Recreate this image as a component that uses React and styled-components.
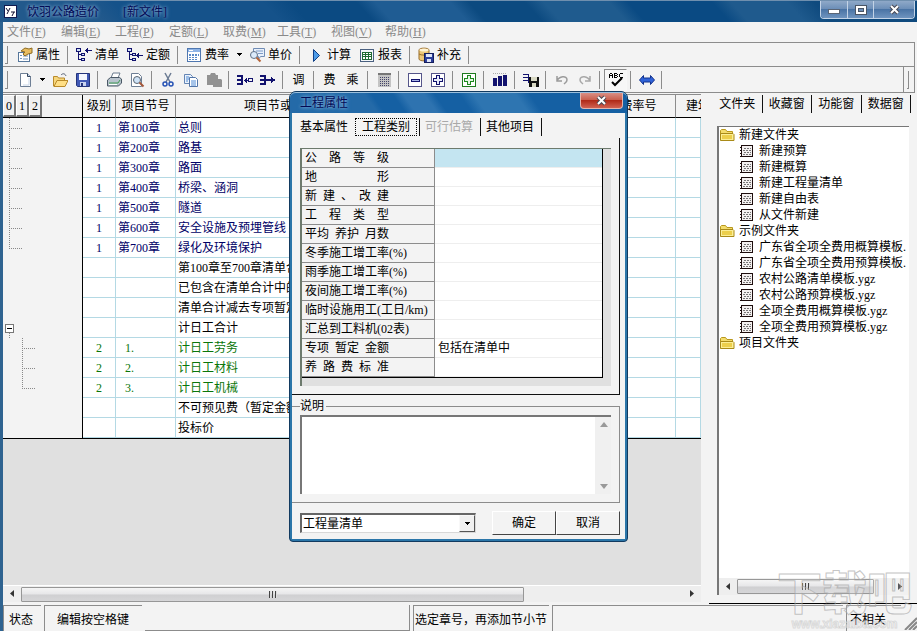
import React from "react";
import styled, { createGlobalStyle, css } from "styled-components";

const GlobalStyle = createGlobalStyle`
  * { box-sizing: border-box; }
  html, body, #root { height: 100%; }
  body {
    margin: 0;
    overflow: hidden;
    background: #f3f3f3;
    color: #000;
    font: 12px/16px "Liberation Serif", "Noto Sans CJK SC", sans-serif;
  }
  button, input, select, textarea { font: inherit; color: inherit; }
`;

/* ---------- window frame ---------- */

const Window = styled.div`
  position: relative;
  display: flex;
  flex-direction: column;
  height: 100vh;
  min-height: 600px;
  overflow: hidden;
  background: #f3f3f3;
`;

const TitleBar = styled.header`
  display: flex;
  align-items: center;
  height: 22px;
  padding-left: 4px;
  border-top: 1px solid #6f8fae;
  background: linear-gradient(
    48deg,
    #22598c 0 11%, #15528a 14% 30%, #0b4a82 33% 40%, #1f5c93 42% 50%,
    #0c4a80 52% 58%, #1f5b8e 60% 67%, #0a4a83 69% 78%, #1f5a8d 80% 86%, #0f4a7e 89%
  );
`;

const Title = styled.h1`
  display: flex;
  gap: 24px;
  flex: 1;
  margin: 0 0 0 10px;
  font-size: 12px;
  font-weight: 400;
  color: #020a55;
  text-shadow: 0 0 3px #7fa8cf, 0 0 4px #7fa8cf;
`;

const CaptionButtons = styled.div`
  display: flex;
  align-self: flex-start;
  height: 18px;
  margin-right: 2px;
  border: 1px solid #c3d3e6;
  border-top: 0;
  border-radius: 0 0 4px 4px;
  overflow: hidden;
`;

const CaptionButton = styled.button`
  display: flex;
  align-items: center;
  justify-content: center;
  width: ${(p) => (p.$wide ? 41 : 26)}px;
  padding: 0;
  border: 0;
  border-left: ${(p) => (p.$first ? "0" : "1px solid #c3d3e6")};
  background: linear-gradient(#8fa9c8, #6d8fb8 45%, #4a74a5 50%, #6f94bf);
`;

const Content = styled.div`
  display: flex;
  flex-direction: column;
  flex: 1;
  min-height: 0;
  border-left: 3px solid #2f6390;
`;

/* ---------- menu and toolbars ---------- */

const MenuBar = styled.nav`
  display: grid;
  grid-template-columns: repeat(8, 54px);
  height: 20px;
`;

const MenuButton = styled.button`
  padding: 0 0 0 4px;
  border: 0;
  background: none;
  color: #8a8a8a;
  text-align: left;
  white-space: nowrap;
`;

const Toolbar = styled.div`
  display: flex;
  align-items: center;
  height: ${(p) => (p.$tall ? 27 : 24)}px;
  margin-right: 2px;
  padding-left: 2px;
  border-top: 1px solid #8c8c8c;
  border-right: 1px solid #8c8c8c;
  border-bottom: ${(p) => (p.$tall ? "1px solid #8c8c8c" : "0")};
`;

const Grip = styled.span`
  width: 3px;
  height: 18px;
  margin-right: 5px;
  border-right: 1px solid #8c8c8c;
  border-bottom: 1px solid #8c8c8c;
`;

const EndGrip = styled.span`
  display: flex;
  align-items: center;
  align-self: stretch;
  width: 11px;
  margin-left: auto;
  padding-left: 3px;
  border-left: 1px solid #8c8c8c;
`;

const Separator = styled.span`
  width: 1px;
  height: 18px;
  margin: 0 4px 0 3px;
  background: #8c8c8c;
`;

const ToolButton = styled.button`
  display: flex;
  align-items: center;
  justify-content: ${(p) => (p.$label ? "flex-start" : "center")};
  gap: 3px;
  flex: none;
  width: ${(p) => (p.$label ? 51 : 23)}px;
  height: 22px;
  padding: 0 ${(p) => (p.$label ? 4 : 0)}px;
  border: 1px solid transparent;
  border-width: ${(p) => (p.$pressed ? "1px" : "0")};
  background: none;
  white-space: nowrap;
  ${(p) => p.$pressed && css`border-color: #8c8c8c #f8f8f8 #f8f8f8 #8c8c8c; background: #f7f7f7;`}
`;

const CaretButton = styled.button`
  display: flex;
  align-items: center;
  justify-content: center;
  width: 12px;
  height: 20px;
  padding: 0;
  border: 0;
  background: none;
`;

const Main = styled.main`
  display: flex;
  flex: 1;
  min-height: 0;
`;

/* ---------- bill table ---------- */

const Workspace = styled.section`
  display: flex;
  flex-direction: column;
  flex: 1;
  min-width: 0;
  margin: 1px 0 2px;
  overflow: hidden;
  border-top: 1px solid #8c8c8c;
  background: #e0e0e0;
`;

const BillTable = styled.table`
  width: 100%;
  table-layout: fixed;
  border-collapse: separate;
  border-spacing: 0;
  border-bottom: 1px solid #000;
  background: #fff;
`;

const HeadCell = styled.th`
  height: 23px;
  padding: 0;
  padding-left: ${(p) => (p.$cut ? 10 : 0)}px;
  border-right: 1px solid ${(p) => (p.$dark ? "#000" : "#8c8c8c")};
  border-right-width: ${(p) => (p.$cut ? 0 : 1)}px;
  border-bottom: 1px solid #000;
  background: #f3f3f3;
  font-weight: 400;
  text-align: ${(p) => (p.$cut ? "left" : "center")};
  white-space: nowrap;
  overflow: hidden;
`;

const LevelButtons = styled.div`
  display: flex;
  height: 22px;
`;

const LevelButton = styled.button`
  width: 13px;
  padding: 0;
  border: 1px solid #fff;
  border-right: 2px solid #777;
  border-bottom: 2px solid #777;
  background: #f0f0f0;
`;

const tones = { navy: "#000066", black: "#000", green: "#0a760a" };

const Cell = styled.td`
  height: 20px;
  padding: 0 2px;
  border-right: 1px solid #b4d9e4;
  border-bottom: 1px solid #b4d9e4;
  color: ${(p) => tones[p.$tone]};
  line-height: 18px;
  text-align: ${(p) => (p.$center ? "center" : "left")};
  text-indent: ${(p) => (p.$indent ? 7 : 0)}px;
  white-space: nowrap;
  overflow: hidden;
`;

const TreeCell = styled.td`
  height: 20px;
  padding: 0;
  border-right: 1px solid #000;
  background: #f3f3f3;
  svg { display: block; }
`;

const WorkspaceFiller = styled.div`
  flex: 1;
`;

/* ---------- scroll bars ---------- */

const ScrollBar = styled.div`
  display: flex;
  align-items: center;
  height: 17px;
  background: #eeeeee;
  border-top: ${(p) => (p.$edge ? "1px solid #fff" : "0")};
`;

const ScrollArrow = styled.button`
  display: flex;
  align-items: center;
  justify-content: center;
  width: 18px;
  height: 16px;
  padding: 0;
  border: 0;
  background: none;
`;

const ScrollTrack = styled.div`
  flex: 1;
`;

const ScrollThumb = styled.div`
  display: flex;
  align-items: center;
  justify-content: center;
  gap: 1px;
  width: ${(p) => p.$share}%;
  height: 15px;
  border: 1px solid #979797;
  border-radius: 1px;
  background: linear-gradient(#f5f5f5, #e6e6e8 48%, #cfcfd1 52%, #d6d6d8);
  i { width: 2px; height: 7px; border-left: 1px solid #444; border-right: 1px solid #ddd; }
`;

/* ---------- side panel ---------- */

const SidePanel = styled.aside`
  display: flex;
  flex-direction: column;
  width: 208px;
  margin-left: 8px;
  padding: 1px 6px 8px 4px;
  border-bottom: 1px solid #000;
`;

const SideTabs = styled.div`
  display: flex;
  height: 20px;
  margin-bottom: 12px;
`;

const SideTab = styled.button`
  flex: 1;
  height: 18px;
  margin-top: 1px;
  padding: 0;
  border: 0;
  border-right: 1px solid #111;
  background: none;
  white-space: nowrap;
`;

const FileBox = styled.div`
  display: flex;
  flex-direction: column;
  flex: 1;
  min-height: 0;
  margin: 0 2px 0 4px;
  border: 1px solid #777;
  border-left-width: 2px;
  border-right: 0;
  border-bottom: 0;
  background: #fff;
`;

const FileTree = styled.ul`
  flex: 1;
  margin: 0;
  padding: 0 2px 0 0;
  list-style: none;
  overflow: hidden;
`;

const FileRow = styled.li`
  display: flex;
  align-items: center;
  gap: ${(p) => (p.$folder ? 4 : 5)}px;
  height: 16px;
  padding-left: ${(p) => (p.$folder ? 0 : 21)}px;
  white-space: nowrap;
  overflow: hidden;
  svg { flex: none; }
`;

/* ---------- status bar ---------- */

const StatusBar = styled.footer`
  display: flex;
  gap: 3px;
  height: 27px;
  padding-top: 1px;
`;

const StatusCell = styled.div`
  flex: ${(p) => (p.$grow ? `1 1 ${p.$w}px` : "none")};
  width: ${(p) => p.$w}px;
  padding: 6px 0 0 ${(p) => p.$pad || 0}px;
  border-top: ${(p) => (p.$hollow ? "0" : "1px solid #8c8c8c")};
  border-left: ${(p) => (p.$hollow ? "0" : "1px solid #8c8c8c")};
  ${(p) => p.$hollow && css`border-right: 1px solid #8c8c8c; border-bottom: 1px solid #8c8c8c;`}
  white-space: nowrap;
`;

/* ---------- dialog ---------- */

const Dialog = styled.section`
  position: absolute;
  top: 91px;
  left: 289px;
  display: flex;
  flex-direction: column;
  width: 339px;
  border: 1px solid #123a60;
  border-radius: 7px 7px 4px 4px;
  background: #2b76a9;
  padding: 0 2px 2px;
`;

const DialogTitle = styled.header`
  display: flex;
  align-items: center;
  justify-content: space-between;
  height: 21px;
  margin: 0 -2px;
  padding: 0 4px 0 10px;
  border-top: 1px solid #9cc0dd;
  border-radius: 6px 6px 0 0;
  background: linear-gradient(
    55deg,
    #246aa8 0 25%, #1560a3 27% 33%, #2e73b0 36% 42%, #1560a3 45% 52%, #2e75b1 56% 68%, #1560a3 72%
  );
  color: #020a55;
  h2 {
    margin: 0;
    font-size: 12px;
    font-weight: 400;
    text-shadow: 0 0 3px #7fb0da, 0 0 4px #7fb0da;
  }
`;

const CloseButton = styled.button`
  display: flex;
  align-items: center;
  justify-content: center;
  align-self: flex-start;
  width: 43px;
  height: 16px;
  padding: 0;
  border: 1px solid #e3b4ac;
  border-top: 0;
  border-radius: 0 0 4px 4px;
  background: linear-gradient(#d98f84, #c9604f 45%, #b02a18 50%, #d06252);
`;

const DialogBody = styled.form`
  display: flex;
  flex-direction: column;
  background: #f3f3f3;
`;

const DialogTabs = styled.div`
  display: flex;
  align-items: center;
  height: 22px;
  margin-top: 3px;
  padding-left: 3px;
`;

const DialogTab = styled.button`
  width: ${(p) => (p.$active ? 65 : 61)}px;
  height: 18px;
  padding: 0;
  border: 0;
  border-right: 1px solid #111;
  background: none;
  white-space: nowrap;
  &:first-child { border-right: 0; width: 60px; }
  &:disabled { color: #a9a9a9; }
  span {
    display: block;
    height: 18px;
    margin-right: 2px;
    border: 1px ${(p) => (p.$active ? "dotted #000" : "solid transparent")};
  }
`;

const TabPage = styled.div`
  margin-right: 5px;
  padding: 10px 8px 8px;
  border-right: 1px solid #111;
  border-bottom: 1px solid #111;
`;

const GridFrame = styled.div`
  padding: 0 8px 8px 0;
  border-top: 1px solid #6d7a6d;
  border-left: 2px solid #6d7a6d;
  background: #e0e0e0;
`;

const PropertyTable = styled.table`
  width: 100%;
  table-layout: fixed;
  border-collapse: separate;
  border-spacing: 0;
  border-right: 1px solid #000;
  border-bottom: 1px solid #000;
  background: #fff;
`;

const PropertyName = styled.th`
  height: 19px;
  padding: 0 0 0 3px;
  border-right: 1px solid #8c8c8c;
  border-bottom: 1px solid #8c8c8c;
  background: #f3f3f3;
  font-weight: 400;
  line-height: 16px;
  text-align: left;
  white-space: nowrap;
`;

const SpreadText = styled.span`
  display: flex;
  justify-content: space-between;
  width: 84px;
`;

const PropertyValue = styled.td`
  height: 19px;
  padding: 0 3px;
  border-bottom: 1px solid #eeeeee;
  background: ${(p) => (p.$selected ? "#c4e5f1" : "#fff")};
  line-height: 16px;
`;

const NoteGroup = styled.fieldset`
  margin: 3px 5px 0 0;
  padding: 1px 8px 8px;
  border: 1px solid #8c8c8c;
  border-left: 0;
  legend { margin: 0; padding: 0 2px 0 0; line-height: 16px; }
`;

const NoteBox = styled.div`
  display: flex;
  height: 79px;
  border-top: 2px solid #777;
  border-left: 2px solid #777;
  background: #fff;
`;

const NoteInput = styled.textarea`
  flex: 1;
  min-width: 0;
  padding: 2px;
  border: 0;
  outline: 0;
  resize: none;
  overflow: hidden;
  background: #fff;
`;

const NoteScroll = styled.div`
  display: flex;
  flex-direction: column;
  justify-content: space-between;
  width: 16px;
  background: #f0f0f0;
`;

const DialogActions = styled.div`
  display: flex;
  align-items: center;
  padding: 8px 5px 4px 8px;
`;

const ModeField = styled.div`
  position: relative;
  flex: 1;
  margin-right: 16px;
`;

const ModeSelect = styled.select`
  display: block;
  width: 100%;
  height: 20px;
  padding: 0 20px 0 1px;
  appearance: none;
  border: 1px solid #d8d8d8;
  border-top: 2px solid #666;
  border-left: 2px solid #666;
  border-radius: 0;
  background: #fff;
  line-height: 16px;
`;

const SelectArrow = styled.span`
  position: absolute;
  top: 2px;
  right: 1px;
  display: flex;
  align-items: center;
  justify-content: center;
  width: 16px;
  height: 17px;
  border: 1px solid #f8f8f8;
  border-right-color: #555;
  border-bottom-color: #555;
  background: #f0f0f0;
  pointer-events: none;
`;

const ActionButton = styled.button`
  width: 64px;
  height: 24px;
  padding: 0;
  border: 1px solid #fff;
  border-right: 1px solid #444;
  border-bottom: 1px solid #444;
  background: #f3f3f3;
`;

/* ---------- site mark over the lower right corner ---------- */

const SiteMark = styled.div`
  position: absolute;
  right: 4px;
  bottom: 1px;
  width: 137px;
  pointer-events: none;
  text-align: center;
  strong {
    display: block;
    font: 900 45px/54px "Noto Sans CJK SC", sans-serif;
    color: rgba(255, 255, 255, 0.2);
    -webkit-text-stroke: 1px rgba(165, 165, 165, 0.65);
  }
  small {
    display: block;
    font: 700 12px/12px "Liberation Sans", sans-serif;
    color: rgba(255, 255, 255, 0.5);
    -webkit-text-stroke: 1px rgba(190, 190, 190, 0.5);
  }
`;

/* ---------- icons ---------- */

const Svg = ({ w = 16, h = 16, smooth, children }) => (
  <svg width={w} height={h} viewBox={`0 0 ${w} ${h}`} fill="none" aria-hidden="true"
    shapeRendering={smooth ? "auto" : "crispEdges"}>{children}</svg>
);

const Caret = () => <Svg w={7} h={4}><path d="M1 0h5v1H1zM2 1h3v1H2zM3 2h1v1H3z" fill="#000" /></Svg>;

const navy = "#12126e";

const icons = {
  props: (
    <Svg smooth>
      <rect x="1.5" y="5.5" width="11" height="9" fill="#fff" stroke="#56779b" />
      <path d="M3 8.500h2M3 11.500h2M6 9h5M6 12h5" stroke="#6f93bd" />
      <path d="M4 4l4-3 4 1 3-1v5l-4 1-3 2-2-2 2-2z" fill="#e8bd62" stroke="#8d6a20" />
    </Svg>
  ),
  list: (
    <Svg>
      <path d="M3 3v10M3 7.500h3M3 12.500h3M10 3.500h6" stroke={navy} />
      <path d="M0 1h5v4H0zM5 6h4v3H5zM5 11h4v3H5z" fill={navy} />
      <path d="M1 2h3v2H1zM6 7h2v1H6zM6 12h2v1H6z" fill="#cfe0f5" />
      <path d="M12 1v5l-3-2.500z" fill={navy} />
    </Svg>
  ),
  quota: (
    <Svg>
      <path d="M3 3v10M3 7.500h3M3 12.500h3M10 8.500h6" stroke={navy} />
      <path d="M0 1h5v4H0zM5 6h4v3H5zM5 11h4v3H5z" fill={navy} />
      <path d="M1 2h3v2H1zM6 7h2v1H6zM6 12h2v1H6z" fill="#cfe0f5" />
      <path d="M12 6v5L9 8.500z" fill={navy} />
    </Svg>
  ),
  rate: (
    <Svg>
      <rect x="1.500" y="1.500" width="13" height="13" fill="#fff" stroke="#4f77b0" />
      <path d="M2 2h12v3H2z" fill="#8fb4e6" />
      <path d="M3 7h2M6 7h2M9 7h2M12 7h1M3 9h2M6 9h2M9 9h2M12 9h1M3 11h2M6 11h2M9 11h2M3 13h2M6 13h2M9 13h2" stroke="#5a8ac8" />
      <path d="M3 3h4v1H3z" fill="#fff" />
    </Svg>
  ),
  price: (
    <Svg smooth>
      <path d="M4.500 1.500h11v8h-4l-2 3v-3h-5z" fill="#e8f0fb" stroke="#6f8cb5" />
      <path d="M7 4h7M9 6.500h5" stroke="#7d9cc8" />
      <circle cx="5" cy="8" r="3.500" fill="#dbeafa" stroke="#5e6f86" />
      <path d="M7.500 10.500l4 4" stroke="#b5653a" strokeWidth="2" />
    </Svg>
  ),
  play: <Svg smooth><path d="M5.500 2.500l6 6-6 6z" fill="#4c9be8" stroke="#0d3d86" /></Svg>,
  report: (
    <Svg>
      <rect x="1.500" y="2.500" width="13" height="12" fill="#f4f7fb" stroke="#4a6080" />
      <path d="M3 5h10v8H3z" fill="#1f6b34" />
      <path d="M4 6h2v1H4zM7 6h2v1H7zM10 6h2v1h-2zM4 8h2v1H4zM7 8h2v1H7zM10 8h2v1h-2zM4 10h2v2H4zM7 10h2v2H7zM10 10h2v2h-2z" fill="#fff" />
    </Svg>
  ),
  supplement: (
    <Svg smooth>
      <path d="M1 3c0-2.500 10-2.500 10 0v9c0 2.500-10 2.500-10 0z" fill="#eec878" stroke="#9a6d2c" />
      <ellipse cx="6" cy="3" rx="4.500" ry="1.500" fill="#fff3d4" />
      <path d="M1 7c2 1.500 8 1.500 10 0" stroke="#9a6d2c" />
      <rect x="6.500" y="6.500" width="9" height="9" fill="#2d3f9c" stroke="#141d5c" />
      <path d="M8 7h6v3H8zM9 12h4v3H9z" fill="#dfe5f7" />
    </Svg>
  ),
  file: (
    <Svg smooth>
      <path d="M3.500 1.500h7l3 3v10h-10z" fill="#fff" stroke="#6e7f95" />
      <path d="M10.500 1.500v3h3" fill="#c9daf0" stroke="#33445c" />
      <path d="M12 6v7H6" stroke="#c8d6e8" />
    </Svg>
  ),
  open: (
    <Svg smooth>
      <path d="M1.500 14V4.500h4l1 1.500h6v8z" fill="#f6d67c" stroke="#b98a2a" />
      <path d="M9 3c2-2 4-1.500 5 1" stroke="#555f74" />
      <path d="M2 14.500l3-6h11l-3 6z" fill="#ffdf86" stroke="#b98a2a" />
    </Svg>
  ),
  save: (
    <Svg smooth>
      <path d="M1.500 1.500h13v13h-12l-1-1z" fill="#4159b5" stroke="#25357c" />
      <path d="M4 2h8v6H4z" fill="#f4f7ff" />
      <path d="M5 10h6v4H5z" fill="#c9d3ef" /><path d="M6 11h2v3H6z" fill="#25357c" />
    </Svg>
  ),
  print: (
    <Svg smooth>
      <path d="M5 6l2-5h7l-2 5z" fill="#fff" stroke="#6b7b8e" />
      <path d="M1.500 8l3-2.500h9l2 1.500v4l-3 3h-11z" fill="#b8c3cd" stroke="#4a5866" />
      <path d="M3 11h9l2-3" stroke="#3f9a52" /><path d="M3 12h8v1H3z" fill="#fff" />
    </Svg>
  ),
  preview: (
    <Svg smooth>
      <path d="M2.500 1.500h7l3 3v10h-10z" fill="#fff" stroke="#6e7f95" />
      <circle cx="8" cy="8" r="3.500" fill="#cfe3f7" stroke="#5a6572" />
      <path d="M10.500 10.500l4 4" stroke="#a5583a" strokeWidth="2" />
    </Svg>
  ),
  cut: (
    <Svg smooth>
      <path d="M5 1l5 9M11 1L6 10" stroke="#6b7b93" strokeWidth="1.500" />
      <circle cx="5" cy="12" r="2" stroke="#2753b5" strokeWidth="1.500" />
      <circle cx="11" cy="12" r="2" stroke="#2753b5" strokeWidth="1.500" />
    </Svg>
  ),
  copy: (
    <Svg smooth>
      <path d="M1.500 2.500h6l2 2v7h-8z" fill="#eaf2fc" stroke="#6485b4" />
      <path d="M6.500 5.500h6l2 2v7h-8z" fill="#fff" stroke="#5275a8" />
      <path d="M3 5h3M3 7h3M3 9h2M8 9h5M8 11h5M8 13h5" stroke="#4f8ad4" />
    </Svg>
  ),
  paste: (
    <Svg smooth>
      <path d="M1 3h3l1-2h4l1 2h2v4h3l1 1v7H7v-2H1z" fill="#929292" />
    </Svg>
  ),
  indent: (
    <Svg>
      <path d="M0 3h6v2H0zM0 7h6v2H0zM0 11h6v2H0zM4 3h2v10H4z" fill={navy} />
      <path d="M7 8.500h4" stroke={navy} />
      <path d="M10 6v5L7 8.500z" fill={navy} />
      <rect x="11.500" y="6.500" width="4" height="3" stroke={navy} />
    </Svg>
  ),
  outdent: (
    <Svg>
      <path d="M0 3h6v2H0zM0 7h6v2H0zM0 11h6v2H0zM4 3h2v10H4z" fill={navy} />
      <path d="M6 8h9" stroke={navy} strokeWidth="2" /><path d="M11 5l4 3-4 3z" fill={navy} />
    </Svg>
  ),
  calc: (
    <Svg>
      <rect x="2" y="1" width="13" height="14" fill="#c4c4c4" />
      <path d="M2 1h13v2H2z" fill="#777" />
      <path d="M4 5.500h10M4 7.500h10M4 9.500h10M4 11.500h10M4 13.500h10" stroke="#44446a" strokeDasharray="1 1" />
    </Svg>
  ),
  minus: (
    <Svg>
      <rect x="1.500" y="1.500" width="13" height="13" fill="#fff" stroke="#55558a" />
      <rect x="4" y="7" width="9" height="3" fill={navy} /><path d="M5 8h7v1H5z" fill="#aab6e6" />
    </Svg>
  ),
  plus: (
    <Svg>
      <rect x="1.500" y="1.500" width="13" height="13" fill="#fff" stroke="#55558a" />
      <path d="M6.500 3.500h3v3h3v3h-3v3h-3v-3h-3v-3h3z" fill="#e6ebfa" stroke={navy} />
    </Svg>
  ),
  greenPlus: (
    <Svg>
      <rect x="1.500" y="1.500" width="13" height="13" fill="#fff" stroke="#1e7a1e" />
      <path d="M6.500 3.500h3v3h3v3h-3v3h-3v-3h-3v-3h3z" fill="#e3f6e3" stroke="#1e8a1e" />
    </Svg>
  ),
  chart: (
    <Svg>
      <path d="M1 1h14" stroke="#aaa" strokeDasharray="1 1" />
      <path d="M1 6h4v8H1zM6 4h4v10H6zM11 3h4v11h-4z" fill={navy} />
    </Svg>
  ),
  treeSave: (
    <Svg>
      <path d="M0 2.500h6M0 5.500h6M0 8.500h6M5.500 2v9" stroke={navy} />
      <rect x="6" y="5" width="10" height="10" fill="#111" />
      <path d="M8 5h6v4H8zM9 11h4v4H9z" fill="#d9d9c4" />
    </Svg>
  ),
  undo: <Svg smooth><path d="M3 4v5h5M3 9c2-5 10-6 10-1 0 2-2 3-3 4" stroke="#9b9b9b" strokeWidth="1.500" /></Svg>,
  redo: <Svg smooth><path d="M13 4v5H8M13 9C11 4 3 3 3 8c0 2 2 3 3 4" stroke="#a8a8a8" strokeWidth="1.500" /></Svg>,
  spell: (
    <Svg>
      <path d="M1 2h1v4H1zM2 1h2v1H2zM2 3h2v1H2zM4 2h1v4H4zM6 1h1v5H6zM7 1h2v1H7zM7 3h2v1H7zM7 5h2v1H7zM9 2h1v1H9zM9 4h1v1H9zM12 1h3v1h-3zM11 2h1v3h-1zM12 5h3v1h-3z" fill="#000" />
      <path d="M4 10l3 3 7-7" stroke="#000" strokeWidth="2" shapeRendering="auto" />
    </Svg>
  ),
  fit: (
    <Svg smooth>
      <path d="M.5 8l4-4.500V6h7V3.500l4 4.500-4 4.500V10h-7v2.500z" fill="#2f62d8" stroke="#12328c" />
    </Svg>
  ),
};

const AppIcon = () => (
  <Svg w={13} h={13}>
    <rect x=".5" y=".5" width="12" height="12" fill="#fff" stroke="#101a50" />
    <path d="M2 3l2 3M6 3L3 9M7 7h4M10 7l-2 4" stroke="#101030" strokeWidth="1" shapeRendering="auto" />
  </Svg>
);

const FolderIcon = () => (
  <Svg smooth>
    <path d="M1.500 13V3.500l1-1h4l1.500 2h5.500V13z" fill="#f3dc6c" stroke="#b9981e" />
    <path d="M1.500 13.500v-7h12.500l1 1v6z" fill="#fbee96" stroke="#a98a18" />
    <path d="M3 8h10v4H3z" fill="#eccf4c" />
  </Svg>
);

const FormIcon = () => (
  <Svg w={14} h={14}>
    <rect x="1.500" y="1.500" width="11" height="11" fill="#f4f0f0" stroke="#1d0d0d" />
    <path d="M2 12h11v1H2z" fill="#1d0d0d" />
    <path d="M0 3.500h2M0 6.500h2M0 9.500h2M0 12.500h2" stroke="#1d0d0d" />
    <path d="M4 4.500h7M3 6.500h8M4 8.500h7M3 10.500h8" stroke="#777" strokeDasharray="2 1" />
  </Svg>
);

const Arrow = ({ dir, color = "#333" }) => {
  const shapes = {
    left: "M6 0v7L2 3.500z",
    right: "M2 0v7l4-3.500z",
    up: "M4 1l4 5H0z",
    down: "M0 2h8L4 7z",
  };
  return <Svg w={8} h={8} smooth><path d={shapes[dir]} fill={color} /></Svg>;
};

const CloseMark = () => (
  <Svg w={13} h={11} smooth>
    <path d="M3 2l7 7M10 2L3 9" stroke="#4a4a55" strokeWidth="4" />
    <path d="M3 2l7 7M10 2L3 9" stroke="#fff" strokeWidth="2" />
  </Svg>
);

const TreeMark = ({ kind }) => {
  const paths = {
    branch: "M6.500 0v20M8 10.500h12",
    end: "M6.500 0v10M6 10.500h14",
    subBranch: "M19.500 0v20M21 10.500h12",
    subEnd: "M19.500 0v10M19 10.500h14",
    node: "M6.500 15v5",
  };
  if (!paths[kind]) return null;
  return (
    <Svg w={40} h={20}>
      <path d={paths[kind]} stroke="#888" strokeDasharray="1 1" />
      {kind === "node" && (
        <>
          <rect x="2.500" y="6.500" width="8" height="8" fill="#fff" stroke="#777" />
          <path d="M4 10.500h5" stroke="#000" />
        </>
      )}
    </Svg>
  );
};

/* ---------- data ---------- */

const menus = [
  ["文件", "F"], ["编辑", "E"], ["工程", "P"], ["定额", "L"],
  ["取费", "M"], ["工具", "T"], ["视图", "V"], ["帮助", "H"],
];

const mainTools = [
  ["props", "属性"], "|", ["list", "清单"], ["quota", "定额"], "|", ["rate", "费率"], "v",
  ["price", "单价"], "|", ["play", "计算"], ["report", "报表"], "|", ["supplement", "补充"], "|",
];

const editTools = [
  ["file", "新建"], "v", ["open", "打开"], ["save", "保存"], "|", ["print", "打印"], ["preview", "预览"], "|",
  ["cut", "剪切"], ["copy", "复制"], ["paste", "粘贴"], "|", ["indent", "升级"], ["outdent", "降级"], "|",
  "调", "|", "费", "乘", "|", ["calc", "计算器"], "|", ["minus", "折叠"], ["plus", "展开"], "|",
  ["greenPlus", "添加"], "|", ["chart", "图表"], "|", ["treeSave", "存储"], "|", ["undo", "撤销"],
  ["redo", "重做"], "|", ["spell", "检查"], "|", ["fit", "宽度"], "|",
];

const bill = [
  ["branch", "1", "第100章", "总则", "navy"],
  ["branch", "1", "第200章", "路基", "navy"],
  ["branch", "1", "第300章", "路面", "navy"],
  ["branch", "1", "第400章", "桥梁、涵洞", "navy"],
  ["branch", "1", "第500章", "隧道", "navy"],
  ["branch", "1", "第600章", "安全设施及预埋管线", "navy"],
  ["end", "1", "第700章", "绿化及环境保护", "navy"],
  ["", "", "", "第100章至700章清单合计", "black"],
  ["", "", "", "已包含在清单合计中的", "black"],
  ["", "", "", "清单合计减去专项暂定", "black"],
  ["node", "", "", "计日工合计", "black"],
  ["subBranch", "2", "1.", "计日工劳务", "green"],
  ["subBranch", "2", "2.", "计日工材料", "green"],
  ["subEnd", "2", "3.", "计日工机械", "green"],
  ["", "", "", "不可预见费（暂定金额", "black"],
  ["", "", "", "投标价", "black"],
];

const properties = [
  ["公 路 等 级", ""], ["地 形", ""], ["新 建 、 改 建", ""], ["工 程 类 型", ""],
  ["平均 养护 月数", ""], ["冬季施工增工率(%)", ""], ["雨季施工增工率(%)", ""],
  ["夜间施工增工率(%)", ""], ["临时设施用工(工日/km)", ""], ["汇总到工料机(02表)", ""],
  ["专项 暂定 金额", "包括在清单中"], ["养 路 费 标 准", ""],
];

const files = [
  [true, "新建文件夹"], [false, "新建预算"], [false, "新建概算"], [false, "新建工程量清单"],
  [false, "新建自由表"], [false, "从文件新建"], [true, "示例文件夹"],
  [false, "广东省全项全费用概算模板."], [false, "广东省全项全费用预算模板."],
  [false, "农村公路清单模板.ygz"], [false, "农村公路预算模板.ygz"],
  [false, "全项全费用概算模板.ygz"], [false, "全项全费用预算模板.ygz"], [true, "项目文件夹"],
];

/* ---------- composed parts ---------- */

const ToolItems = ({ items, labelled }) =>
  items.map((item, i) => {
    if (item === "|") return <Separator key={i} />;
    if (item === "v") return <CaretButton key={i} aria-label="更多"><Caret /></CaretButton>;
    if (typeof item === "string") return <ToolButton key={i}>{item}</ToolButton>;
    const [icon, label] = item;
    return (
      <ToolButton key={i} $label={labelled} $pressed={icon === "spell"} aria-label={label}>
        {icons[icon]}{labelled && label}
      </ToolButton>
    );
  });

const HorizontalScroll = ({ share, edge }) => (
  <ScrollBar $edge={edge}>
    <ScrollArrow aria-label="向左"><Arrow dir="left" /></ScrollArrow>
    <ScrollTrack><ScrollThumb $share={share}><i /><i /><i /></ScrollThumb></ScrollTrack>
    <ScrollArrow aria-label="向右"><Arrow dir="right" /></ScrollArrow>
  </ScrollBar>
);

const Bill = () => (
  <BillTable>
    <colgroup>
      <col style={{ width: 80 }} /><col style={{ width: 33 }} /><col style={{ width: 60 }} />
      <col /><col style={{ width: 193 }} /><col style={{ width: 74 }} /><col style={{ width: 25 }} />
    </colgroup>
    <thead>
      <tr>
        <HeadCell $dark>
          <LevelButtons>
            {["0", "1", "2"].map((n) => <LevelButton key={n}>{n}</LevelButton>)}
          </LevelButtons>
        </HeadCell>
        <HeadCell>级别</HeadCell>
        <HeadCell>项目节号</HeadCell>
        <HeadCell>项目节或细目名称</HeadCell>
        <HeadCell />
        <HeadCell>费率号</HeadCell>
        <HeadCell $cut>建筑</HeadCell>
      </tr>
    </thead>
    <tbody>
      {bill.map(([mark, level, code, name, tone], i) => (
        <tr key={i}>
          <TreeCell><TreeMark kind={mark} /></TreeCell>
          <Cell $tone={tone} $center>{level}</Cell>
          <Cell $tone={tone} $indent={tone === "green"}>{code}</Cell>
          <Cell $tone={tone}>{name}</Cell>
          <Cell /><Cell /><Cell />
        </tr>
      ))}
    </tbody>
  </BillTable>
);

const PropertyDialog = () => (
  <Dialog role="dialog" aria-labelledby="dialog-title">
    <DialogTitle>
      <h2 id="dialog-title">工程属性</h2>
      <CloseButton aria-label="关闭"><CloseMark /></CloseButton>
    </DialogTitle>
    <DialogBody onSubmit={(e) => e.preventDefault()}>
      <DialogTabs role="tablist">
        <DialogTab type="button" role="tab"><span>基本属性</span></DialogTab>
        <DialogTab type="button" role="tab" $active><span>工程类别</span></DialogTab>
        <DialogTab type="button" role="tab" disabled><span>可行估算</span></DialogTab>
        <DialogTab type="button" role="tab"><span>其他项目</span></DialogTab>
      </DialogTabs>
      <TabPage>
        <GridFrame>
          <PropertyTable>
            <colgroup><col style={{ width: 133 }} /><col /></colgroup>
            <tbody>
              {properties.map(([name, value], i) => (
                <tr key={name}>
                  <PropertyName scope="row">
                    {name.includes(" ")
                      ? <SpreadText>{name.split(" ").map((part, j) => <span key={j}>{part}</span>)}</SpreadText>
                      : name}
                  </PropertyName>
                  <PropertyValue $selected={i === 0}>{value}</PropertyValue>
                </tr>
              ))}
            </tbody>
          </PropertyTable>
        </GridFrame>
      </TabPage>
      <NoteGroup>
        <legend>说明</legend>
        <NoteBox>
          <NoteInput aria-label="说明" />
          <NoteScroll>
            <ScrollArrow type="button" aria-label="向上"><Arrow dir="up" color="#999" /></ScrollArrow>
            <ScrollArrow type="button" aria-label="向下"><Arrow dir="down" color="#999" /></ScrollArrow>
          </NoteScroll>
        </NoteBox>
      </NoteGroup>
      <DialogActions>
        <ModeField>
          <ModeSelect aria-label="计价方式" defaultValue="bill">
            <option value="bill">工程量清单</option>
          </ModeSelect>
          <SelectArrow><Caret /></SelectArrow>
        </ModeField>
        <ActionButton type="submit">确定</ActionButton>
        <ActionButton type="button">取消</ActionButton>
      </DialogActions>
    </DialogBody>
  </Dialog>
);

export default function App() {
  return (
    <Window>
      <GlobalStyle />
      <TitleBar>
        <AppIcon />
        <Title><span>饮羽公路造价</span><span>[新文件]</span></Title>
        <CaptionButtons>
          <CaptionButton $first aria-label="最小化">
            <Svg w={12} h={10}><rect x=".5" y="4.500" width="11" height="4" fill="#fff" stroke="#5a6575" /></Svg>
          </CaptionButton>
          <CaptionButton aria-label="最大化">
            <Svg w={12} h={10}>
              <rect x=".5" y=".5" width="11" height="9" fill="#fff" stroke="#4a5565" />
              <rect x="3.500" y="3.500" width="5" height="3" fill="#6d8fb8" stroke="#4a5565" />
            </Svg>
          </CaptionButton>
          <CaptionButton $wide aria-label="关闭"><CloseMark /></CaptionButton>
        </CaptionButtons>
      </TitleBar>
      <Content>
        <MenuBar>
          {menus.map(([name, key]) => <MenuButton key={key}>{name}(<u>{key}</u>)</MenuButton>)}
        </MenuBar>
        <Toolbar>
          <Grip /><ToolItems items={mainTools} labelled />
        </Toolbar>
        <Toolbar $tall>
          <Grip /><ToolItems items={editTools} />
          <EndGrip><Grip /></EndGrip>
        </Toolbar>
        <Main>
          <Workspace>
            <Bill />
            <WorkspaceFiller />
            <HorizontalScroll share={76} edge />
          </Workspace>
          <SidePanel>
            <SideTabs role="tablist">
              {["文件夹", "收藏窗", "功能窗", "数据窗"].map((t) => <SideTab key={t} role="tab">{t}</SideTab>)}
            </SideTabs>
            <FileBox>
              <FileTree>
                {files.map(([folder, name]) => (
                  <FileRow key={name} $folder={folder}>
                    {folder ? <FolderIcon /> : <FormIcon />}
                    <span>{name}</span>
                  </FileRow>
                ))}
              </FileTree>
              <HorizontalScroll share={89} />
            </FileBox>
          </SidePanel>
        </Main>
        <StatusBar>
          <StatusCell $w={38} $pad={5}>状态</StatusCell>
          <StatusCell $w={98} $pad={12}>编辑按空格键</StatusCell>
          <StatusCell $w={265} $hollow />
          <StatusCell $w={136} $pad={1}>选定章号，再添加节小节</StatusCell>
          <StatusCell $w={290} $grow />
          <StatusCell $w={55} $pad={3}>不相关</StatusCell>
          <Svg w={13} h={25} smooth><path d="M1 25L13 13M5 25l8-8M9 25l4-4" stroke="#888" strokeWidth="2" /></Svg>
        </StatusBar>
      </Content>
      <PropertyDialog />
      <SiteMark aria-hidden="true"><strong>下载吧</strong><small>www.xiazaiba.com</small></SiteMark>
    </Window>
  );
}
